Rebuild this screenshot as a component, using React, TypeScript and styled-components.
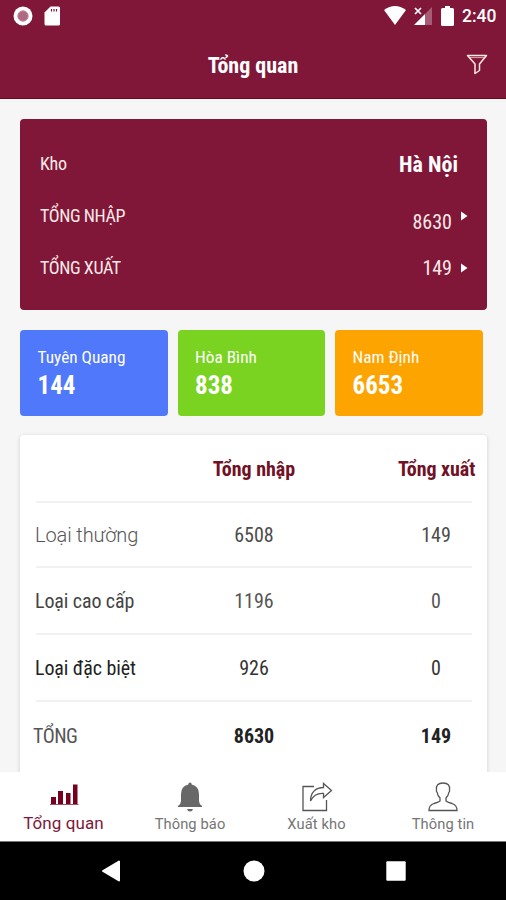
import React from 'react';
import styled, { createGlobalStyle } from 'styled-components';

const GlobalStyle = createGlobalStyle`
  * { box-sizing: border-box; }
  body { margin: 0; background: #f6f6f6; font-family: "Roboto Condensed", Roboto, "Liberation Sans", sans-serif; }
`;

const Screen = styled.div`
  width: 506px;
  height: 900px;
  display: flex;
  flex-direction: column;
  overflow: hidden;
  background: #f6f6f6;
`;

const Top = styled.header`
  height: 98.5px;
  flex: none;
  background: #801738;
  border-bottom: 1px solid #6c0a22;
  color: #fff;
`;

const StatusBar = styled.div`
  height: 31px;
  display: flex;
  align-items: center;
  justify-content: space-between;
  padding: 0 9px 0 13px;
`;

const StatusGroup = styled.div<{ $gap: number }>`
  display: flex;
  align-items: center;
  gap: ${p => p.$gap}px;
`;

const Clock = styled.span`
  font: 500 17.5px/32px Roboto, sans-serif;
  width: 35px;
  white-space: nowrap;
`;

const TitleBar = styled.div`
  height: 69px;
  display: grid;
  grid-template-columns: 60px 1fr 60px;
  align-items: center;
  justify-items: center;
`;

const Label = styled.span<{ $size: number; $weight?: number; $color?: string; $track?: number }>`
  font-size: ${p => p.$size}px;
  font-weight: ${p => p.$weight ?? 400};
  color: ${p => p.$color ?? 'inherit'};
  letter-spacing: ${p => p.$track ?? 0}px;
  line-height: 24px;
  white-space: nowrap;
  font-stretch: 75%;
`;

const WideLabel = styled(Label)`
  font-family: Roboto, sans-serif;
  font-stretch: 100%;
`;

const FilterSlot = styled.div`
  display: flex;
  padding: 0 0 3px 2px;
`;

const Content = styled.main`
  flex: 1;
  min-height: 0;
  overflow: hidden;
  padding: 20.5px 19px 0 20px;
`;

const Summary = styled.section`
  height: 191px;
  padding: 19px 19px 0 20px;
  border-radius: 4px;
  background: #801738;
  color: #fbe9e7;
`;

const SummaryRow = styled.div`
  height: 52px;
  display: flex;
  align-items: center;
  justify-content: space-between;
`;

const Amount = styled.div<{ $drop?: number; $end?: number }>`
  display: flex;
  align-items: center;
  gap: 8px;
  padding-right: ${p => p.$end ?? 0}px;
  > span { margin-top: ${p => p.$drop ?? 0}px; }
`;

const Tiles = styled.section`
  display: grid;
  grid-template-columns: repeat(3, 147.5px);
  gap: 10px;
  margin-top: 19.5px;
`;

const Tile = styled.div<{ $bg: string }>`
  height: 86px;
  display: flex;
  flex-direction: column;
  align-items: flex-start;
  padding: 15.5px 17.5px;
  gap: 5px;
  border-radius: 4px;
  background: ${p => p.$bg};
  color: #fff;
`;

const Sheet = styled.section`
  height: 400px;
  margin-top: 19.5px;
  padding: 0 15px 0 16px;
  border-radius: 4px;
  background: #fff;
  box-shadow: 0 1px 4px rgba(0, 0, 0, 0.16);
`;

const TableRow = styled.div<{ $h: number; $shift?: number }>`
  height: ${p => p.$h}px;
  display: grid;
  grid-template-columns: 145px 146px 1fr;
  align-items: center;
  justify-items: center;
  border-bottom: 2px solid #f0f1f2;
  padding-top: 2px;
  &:last-child { border-bottom-color: transparent; }
  > :first-child { justify-self: start; margin-left: ${p => p.$shift ?? -1}px; }
  > :last-child { margin-left: 73px; }
`;

const HeadRow = styled(TableRow)`
  padding-top: 3px;
  > :last-child { margin-left: 71px; }
`;

const TabBar = styled.nav`
  height: 70px;
  flex: none;
  display: grid;
  grid-template-columns: repeat(4, 1fr);
  background: #fff;
  border-bottom: 1px solid #777;
`;

const Tab = styled.div<{ $active?: boolean }>`
  display: flex;
  flex-direction: column;
  align-items: center;
  padding-top: 9px;
  padding-left: 0.5px;
  color: ${p => (p.$active ? '#801738' : '#757575')};
  font: ${p => (p.$active ? '17px' : '14.7px')}/20px Roboto, sans-serif;
  letter-spacing: 0.1px;
  white-space: nowrap;
  svg { margin-bottom: ${p => (p.$active ? 0 : 2)}px; flex: none; }
`;

const SystemNav = styled.footer`
  height: 58px;
  flex: none;
  display: flex;
  align-items: center;
  justify-content: space-between;
  padding: 0 100px 0 101px;
  background: #000;
`;

const Caret = () => (
  <svg width="8" height="10" viewBox="0 0 8 10"><path d="M1 .5L7.500 5L1 9.500Z" fill="#fff" /></svg>
);

const tiles = [
  { name: 'Tuyên Quang', value: 144, bg: '#5078fb' },
  { name: 'Hòa Bình', value: 838, bg: '#7ad320' },
  { name: 'Nam Định', value: 6653, bg: '#fda400' },
];

const rows = [
  { name: 'Loại thường', inn: 6508, out: 149, h: 65, color: '#555', num: '#4c4c4c', wide: true },
  { name: 'Loại cao cấp', inn: 1196, out: 0, h: 67, color: '#444', num: '#555' },
  { name: 'Loại đặc biệt', inn: 926, out: 0, h: 67, color: '#222', num: '#333' },
  { name: 'TỔNG', inn: 8630, out: 149, h: 69, color: '#555', num: '#222', total: true },
];

export default function App() {
  return (
    <Screen>
      <GlobalStyle />
      <Top>
        <StatusBar>
          <StatusGroup $gap={11}>
            <svg width="20" height="20" viewBox="0 0 20 20">
              <circle cx="10" cy="10" r="9.5" fill="#fff" />
              <circle cx="10" cy="10" r="5.2" fill="#b06a80" stroke="#c48c9d" />
            </svg>
            <svg width="17" height="20" viewBox="0 0 17 20">
              <path d="M6.5 .5H14.5Q16 .5 16 2V18Q16 19.5 14.5 19.5H2Q.5 19.5 .5 18V6.500Z" fill="#fff" />
              <path d="M7.500 3V5.500M10 3V5.500M12.500 3V5.500" stroke="#801738" strokeWidth="1.2" />
            </svg>
          </StatusGroup>
          <StatusGroup $gap={8}>
            <svg width="22" height="19" viewBox="0 0 22 19"><path d="M0 4Q11-4 22 4L11 19Z" fill="#fff" /></svg>
            <svg width="19" height="19" viewBox="0 0 19 19">
              <path d="M18 1V19H11V8Z" fill="#a65c74" />
              <path d="M0 19L11 8V19Z" fill="#fff" />
              <path d="M1 2L7 8M7 2L1 8" stroke="#fff" strokeWidth="1.7" />
            </svg>
            <svg width="13" height="20" viewBox="0 0 13 20"><path d="M4 0H9V2H11.500Q13 2 13 3.500V18.500Q13 20 11.500 20H1.500Q0 20 0 18.500V3.500Q0 2 1.500 2H4Z" fill="#fff" /></svg>
            <Clock>2:40</Clock>
          </StatusGroup>
        </StatusBar>
        <TitleBar>
          <span />
          <Label $size={22} $weight={700}>Tổng quan</Label>
          <FilterSlot>
            <svg width="22" height="21" viewBox="0 0 22 21" fill="none" stroke="#ffe9df" strokeWidth="1.5" strokeLinejoin="round">
              <path d="M1.500 1.500H20.500L13.500 10V16.500L9 19.500V10Z" />
              <path d="M3.500 3.600H18.500" strokeWidth=".7" />
            </svg>
          </FilterSlot>
        </TitleBar>
      </Top>
      <Content>
        <Summary>
          <SummaryRow>
            <Label $size={18} $track={-0.3}>Kho</Label>
            <Amount $end={10} $drop={2}><Label $size={22} $weight={700} $color="#fff">Hà Nội</Label></Amount>
          </SummaryRow>
          <SummaryRow>
            <Label $size={18} $track={-0.4}>TỔNG NHẬP</Label>
            <Amount $drop={11}><Label $size={20}>8630</Label><Caret /></Amount>
          </SummaryRow>
          <SummaryRow>
            <Label $size={18} $track={-0.4}>TỔNG XUẤT</Label>
            <Amount><Label $size={20}>149</Label><Caret /></Amount>
          </SummaryRow>
        </Summary>
        <Tiles>
          {tiles.map(t => (
            <Tile key={t.name} $bg={t.bg}>
              <Label $size={17.3}>{t.name}</Label>
              <Label $size={25} $weight={700}>{t.value}</Label>
            </Tile>
          ))}
        </Tiles>
        <Sheet>
          <HeadRow $h={67.5}>
            <span />
            <Label $size={20} $weight={700} $color="#701126">Tổng nhập</Label>
            <Label $size={20} $weight={700} $color="#701126" $track={-0.05}>Tổng xuất</Label>
          </HeadRow>
          {rows.map(r => (
            <TableRow key={r.name} $h={r.h} $shift={r.total ? -3 : -1}>
              {r.wide
                ? <WideLabel $size={20} $weight={300} $color={r.color} $track={-0.1}>{r.name}</WideLabel>
                : <Label $size={20} $color={r.color} $track={r.total ? -0.5 : -0.1}>{r.name}</Label>}
              <Label $size={20} $weight={r.total ? 700 : 400} $color={r.num}>{r.inn}</Label>
              <Label $size={20} $weight={r.total ? 700 : 400} $color={r.num}>{r.out}</Label>
            </TableRow>
          ))}
        </Sheet>
      </Content>
      <TabBar>
        <Tab $active>
          <svg width="30" height="32" viewBox="0 0 30 32">
            <path d="M2 16H7V23H2ZM9 10H14V23H9ZM17 12H21.500V23H17ZM24 3.500H28.500V23H24Z" fill="#76001d" />
            <path d="M1 23.500H29.500" stroke="#a0506a" />
          </svg>
          Tổng quan
        </Tab>
        <Tab>
          <svg width="26" height="31" viewBox="0 0 26 31" fill="#686868">
            <path d="M11.300 3.500Q11.300 1.500 13 1.500Q14.700 1.500 14.700 3.500Q22 5 22 13V20Q22 23 25 25V26H1V25Q4 23 4 20V13Q4 5 11.300 3.500Z" />
            <path d="M10 28H16Q15.500 30.500 13 30.500Q10.500 30.500 10 28Z" />
          </svg>
          Thông báo
        </Tab>
        <Tab>
          <svg width="32" height="31" viewBox="0 0 32 31" fill="none" stroke="#555" strokeWidth="1.300">
            <path d="M13 5.500H2V29.500H25.500V19" />
            <path d="M9.500 20C9.500 11 15 6.500 22.500 6.500V2.500L30.500 9.500L22.500 16.500V12.500C16 12 12 15 9.500 20Z" />
          </svg>
          Xuất kho
        </Tab>
        <Tab>
          <svg width="30" height="31" viewBox="0 0 30 31" fill="none" stroke="#555" strokeWidth="1.300">
            <path d="M12 20V17Q9.500 14.500 9.200 11.500Q8 10.500 8.500 9Q7.500 2 15 2Q22.500 2 21.500 9Q22 10.500 20.800 11.500Q20.500 14.500 18 17V20Q20 21.500 24 22.500Q29 24 29 29.500H1Q1 24 6 22.500Q10 21.500 12 20Z" />
          </svg>
          Thông tin
        </Tab>
      </TabBar>
      <SystemNav>
        <svg width="20" height="22" viewBox="0 0 20 22"><path d="M18 1.500V20.500L2 11Z" fill="#fff" stroke="#fff" strokeWidth="2" strokeLinejoin="round" /></svg>
        <svg width="22" height="22" viewBox="0 0 22 22"><circle cx="11" cy="11" r="10.500" fill="#fff" /></svg>
        <svg width="20" height="20" viewBox="0 0 20 20"><rect x=".3" y=".3" width="19.400" height="19.400" rx="1" fill="#fff" /></svg>
      </SystemNav>
    </Screen>
  );
}
